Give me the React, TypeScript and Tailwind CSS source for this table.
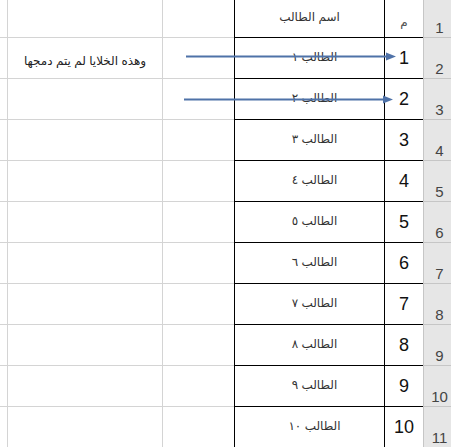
const arabicDigits = ["١", "٢", "٣", "٤", "٥", "٦", "٧", "٨", "٩", "١٠"];

const font = { fontFamily: '"Liberation Sans", "DejaVu Sans", Arial, sans-serif' };

function Row({
  first,
  index,
  note,
  name,
  num,
}: {
  first?: boolean;
  index: number;
  note?: string;
  name: string;
  num: string;
}) {
  const h = first ? "h-[38px]" : "h-[41px]";
  return (
    <div className={`flex ${h}`}>
      <div className="w-[8px] shrink-0 border-r border-b border-[#d4d4d4]" />
      <div className="w-[155px] shrink-0 border-r border-b border-[#d4d4d4] flex items-center justify-center pt-[5px]">
        {note && (
          <span dir="rtl" className="text-[12px] text-[#222]">
            {note}
          </span>
        )}
      </div>
      <div className="w-[71px] shrink-0 border-b border-[#d4d4d4]" />
      <div
        className={`w-[151px] shrink-0 border-l border-r border-b border-black flex items-center justify-center ${
          first ? "pb-[4px]" : "pl-[10px] pb-[2px]"
        }`}
      >
        <span dir="rtl" className="text-[12px] text-[#333]">
          {name}
        </span>
      </div>
      <div className="w-[38px] shrink-0 border-b border-black flex items-center justify-center">
        <span className={first ? "text-[12px] text-[#555] pt-[6px]" : "text-[18px] text-[#111]"}>{num}</span>
      </div>
      <div className="w-[32px] shrink-0 bg-[#e6e6e6] border-l border-b border-[#c6c6c6] flex items-end justify-center pb-[2px]">
        <span className="text-[15px] leading-none text-[#444]">{index}</span>
      </div>
    </div>
  );
}

export default function App() {
  return (
    <div className="relative w-[451px] h-[447px] overflow-hidden bg-white" style={font}>
      <Row first index={1} name="اسم الطالب" num="م" />
      {arabicDigits.map((d, i) => (
        <Row
          key={i}
          index={i + 2}
          name={`الطالب ${d}`}
          num={String(i + 1)}
          note={i === 0 ? "وهذه الخلايا لم يتم دمجها" : undefined}
        />
      ))}
      <svg className="absolute left-0 top-0 pointer-events-none" width="451" height="447">
        <line x1="186" y1="56.5" x2="388" y2="56.5" stroke="#4f72a8" strokeWidth="2" />
        <polygon points="386,52.5 396,56.5 386,60.5" fill="#4f72a8" />
        <line x1="184" y1="99.5" x2="385" y2="99.5" stroke="#4f72a8" strokeWidth="2" />
        <polygon points="383,95.5 393,99.5 383,103.5" fill="#4f72a8" />
      </svg>
    </div>
  );
}
